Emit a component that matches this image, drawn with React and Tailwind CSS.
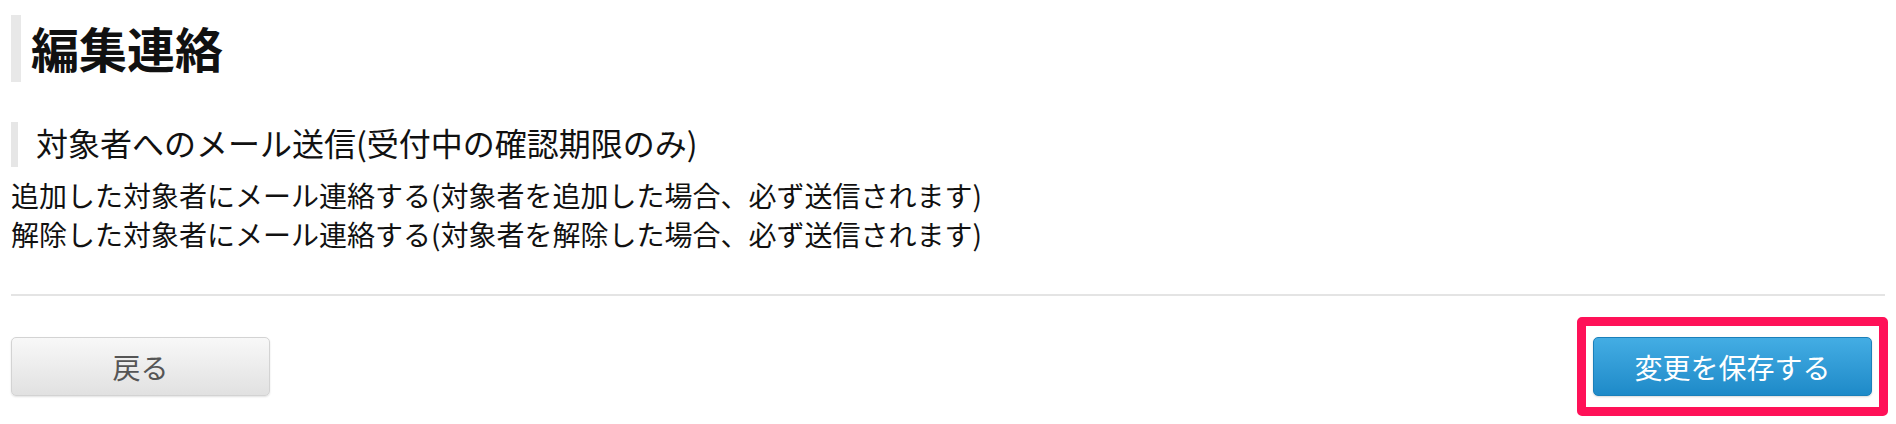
export default function App() {
    const lines = [
        "追加した対象者にメール連絡する(対象者を追加した場合、必ず送信されます)",
        "解除した対象者にメール連絡する(対象者を解除した場合、必ず送信されます)",
    ];

    return (
        <div className="px-[11px] pt-[15px] text-[#111] font-['Noto_Sans_CJK_JP','Noto_Sans',sans-serif]">
            <h1 className="flex items-center h-[67px] border-l-[10px] border-[#e8e8e8] pl-[10px] pb-[3px] text-[48px] font-bold leading-none">
                編集連絡
            </h1>

            <h2 className="mt-[40px] h-[45px] border-l-[7px] border-[#e6e6e6] pl-[18px] text-[32px] leading-[41px] font-normal">
                対象者へのメール送信(受付中の確認期限のみ)
            </h2>

            <div className="mt-[9px] text-[28px] leading-[39px]">
                {lines.map((line, i) => (
                    <p key={i}>{line}</p>
                ))}
            </div>

            <div className="mt-[40px] h-[2px] bg-[#e4e4e4]" />

            <div className="mt-[21px] flex items-center justify-between">
                <button className="w-[259px] h-[59px] rounded-[5px] border border-[#d3d3d3] bg-gradient-to-b from-[#f8f8f8] to-[#e1e1e1] shadow-[0_1px_2px_rgba(0,0,0,0.12)] text-[28px] text-[#555]">
                    戻る
                </button>
                <div className="-mr-[3px] border-[9px] border-[#ff1158] rounded-[5px] px-[7px] py-[11px]">
                    <button className="w-[279px] h-[59px] rounded-[5px] border border-[#1b80ba] bg-gradient-to-b from-[#43ade4] to-[#1d8ac8] shadow-[0_1px_2px_rgba(0,0,0,0.15)] text-[28px] text-white">
                        変更を保存する
                    </button>
                </div>
            </div>
        </div>
    );
}
